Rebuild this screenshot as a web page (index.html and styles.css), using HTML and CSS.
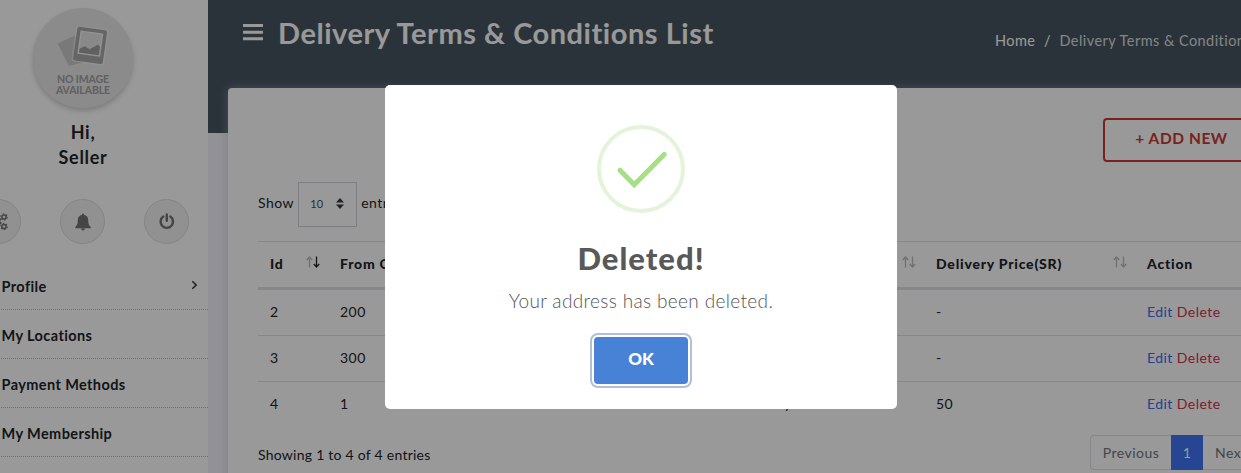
FILE: index.html
```html
<!DOCTYPE html>
<html lang="en">
<head>
<meta charset="utf-8">
<title>Delivery Terms &amp; Conditions List</title>
<link rel="stylesheet" href="styles.css">
</head>
<body>
<div class="app">
  <aside class="sidebar">
    <div class="avatar">
      <svg class="avatar-art" width="54" height="42" viewBox="0 0 54 42">
        <path d="M1.500 17.500 19 9.500 28 36 13 40z" fill="#cacaca"/>
        <g transform="rotate(8 35 20)">
          <rect x="17.500" y="1" width="33" height="37" rx="3" fill="#fff" opacity=".45"/>
          <rect x="19" y="2.500" width="30" height="34" rx="2" fill="#a8a8a8"/>
          <rect x="22.500" y="6" width="23" height="23.500" fill="#f4f4f4"/>
          <rect x="24" y="7.500" width="20" height="20.500" fill="#e4e4e4"/>
          <path d="M24 28V24l5-3 5 2.500 8-6 2 2.500V28z" fill="#a0a0a0"/>
        </g>
      </svg>
      <span class="avatar-text">NO IMAGE<br>AVAILABLE</span>
    </div>
    <div class="greeting">Hi,<br>Seller</div>
    <div class="actions">
      <a class="round"><svg width="20" height="18" viewBox="0 0 20 18" fill="none" stroke="#747474"><circle cx="6" cy="9" r="4" stroke-width="3"/><circle cx="6" cy="9" r="5.800" stroke-width="1.500" stroke-dasharray="2.200 2.300"/><circle cx="15" cy="4" r="2.100" stroke-width="1.500"/><circle cx="15" cy="4" r="3.200" stroke-width="1.200" stroke-dasharray="1.500 1.850"/><circle cx="15" cy="13.500" r="2.100" stroke-width="1.500"/><circle cx="15" cy="13.500" r="3.200" stroke-width="1.200" stroke-dasharray="1.500 1.850"/></svg></a>
      <a class="round"><svg width="16" height="18" viewBox="0 0 16 18" fill="#747474"><path d="M7 1.800V1.500a1 1 0 0 1 2 0v.3c2.600.5 4.200 2.500 4.200 5 0 4 .7 5.900 2.500 7.200v1.300H.3V14c1.800-1.300 2.500-3.200 2.500-7.200 0-2.500 1.600-4.500 4.200-5z"/><path d="M6 15.500h4a2 2 0 0 1-4 0z"/></svg></a>
      <a class="round"><svg width="16" height="17" viewBox="0 0 16 17" fill="none" stroke="#747474" stroke-width="2.400" stroke-linecap="round"><path d="M4.300 3.600a6.200 6.200 0 1 0 7 0M7.800 1.500v6.300"/></svg></a>
    </div>
    <ul class="menu">
      <li><span>Profile</span><svg width="7" height="10" viewBox="0 0 7 10" fill="none" stroke="#333" stroke-width="1.500"><path d="M1.300 1.200 5.200 5 1.300 8.800"/></svg></li>
      <li><span>My Locations</span></li>
      <li><span>Payment Methods</span></li>
      <li><span>My Membership</span></li>
    </ul>
  </aside>
  <main class="main">
    <header class="topbar">
      <svg class="burger" width="20" height="17" viewBox="0 0 20 17" fill="#fff"><path d="M0 0h20v3H0zM0 6.700h20v3H0zM0 13.300h20v3H0z"/></svg>
      <h1>Delivery Terms &amp; Conditions List</h1>
      <nav class="crumbs"><a>Home</a><i>/</i><span>Delivery Terms &amp; Conditions List</span></nav>
    </header>
    <section class="card">
      <div class="toolbar"><button class="add">+ ADD NEW</button></div>
      <div class="length"><span>Show</span><span class="select">10<svg width="8" height="11" viewBox="0 0 8 11" fill="#343a40"><path d="M0 4.500 4 0l4 4.500zM0 6.500h8L4 11z"/></svg></span><span>entries</span></div>
      <table>
        <colgroup><col class="c1"><col class="c2"><col class="c3"><col class="c4"><col class="c5"><col class="c6"></colgroup>
        <thead><tr>
          <th><div>Id<svg class="sort asc" width="14" height="12" viewBox="0 0 14 12"><path d="M3.500 11.500V1M.8 4 3.500 1l2.700 3"/><path class="down" d="M10.500.5V11M7.800 8l2.700 3 2.700-3"/></svg></div></th>
          <th><div>From City</div></th>
          <th></th>
          <th><div>City<svg class="sort" width="14" height="12" viewBox="0 0 14 12"><path d="M3.500 11.500V1M.8 4 3.500 1l2.700 3"/><path class="down" d="M10.500.5V11M7.800 8l2.700 3 2.700-3"/></svg></div></th>
          <th><div>Delivery Price(SR)<svg class="sort" width="14" height="12" viewBox="0 0 14 12"><path d="M3.500 11.500V1M.8 4 3.500 1l2.700 3"/><path class="down" d="M10.500.5V11M7.800 8l2.700 3 2.700-3"/></svg></div></th>
          <th><div>Action</div></th>
        </tr></thead>
        <tbody>
          <tr><td>2</td><td>200</td><td></td><td></td><td>-</td><td><a class="edit">Edit</a> <a class="del">Delete</a></td></tr>
          <tr><td>3</td><td>300</td><td></td><td></td><td>-</td><td><a class="edit">Edit</a> <a class="del">Delete</a></td></tr>
          <tr><td>4</td><td>1</td><td></td><td>Ryad</td><td>50</td><td><a class="edit">Edit</a> <a class="del">Delete</a></td></tr>
        </tbody>
      </table>
      <div class="foot">
        <span class="info">Showing 1 to 4 of 4 entries</span>
        <div class="pager"><a class="prev">Previous</a><a class="cur">1</a><a class="next">Next</a></div>
      </div>
    </section>
  </main>
</div>
<div class="overlay">
  <div class="modal">
    <svg class="tick" width="88" height="88" viewBox="0 0 88 88" fill="none"><circle cx="44" cy="44" r="42" stroke="#a5dc86" stroke-opacity=".3" stroke-width="4"/><path d="M23 45.200 37.200 59.800 67.200 29.400" stroke="#a5e085" stroke-width="5" stroke-linecap="round"/></svg>
    <h2>Deleted!</h2>
    <p>Your address has been deleted.</p>
    <button class="ok">OK</button>
  </div>
</div>
</body>
</html>
```
FILE: styles.css
```css
* { box-sizing: border-box; }
html, body { margin: 0; height: 473px; overflow: hidden; }
body { font: 14px/21px Lato, "Open Sans", sans-serif; font-variant-ligatures: none; letter-spacing: .25px; color: #212529; background: #f3f2fb; position: relative; }
button { font-family: inherit; }
.app { display: flex; width: 1366px; margin-left: -42px; height: 473px; }

.sidebar { width: 250px; background: #fff; flex: none; padding-top: 8px; }
.avatar { width: 100px; height: 100px; margin: 0 auto; border-radius: 50%; background: #e8e8e8; box-shadow: 0 3px 5px rgba(0,0,0,.18); display: flex; flex-direction: column; align-items: center; padding-top: 18px; }
.avatar-art { flex: none; }
.avatar-text { font: 700 10.500px/11px Lato, sans-serif; letter-spacing: -.1px; color: #a0a0a0; text-align: center; margin-top: 6px; }
.greeting { text-align: center; font-size: 18px; line-height: 25px; font-weight: 700; letter-spacing: .7px; margin-top: 12px; height: 79px; }
.actions { display: flex; justify-content: center; gap: 39px; margin-right: 1px; }
.round { width: 45px; height: 45px; border-radius: 50%; background: #f2f2f2; border: 1px solid #ddd; display: flex; align-items: center; justify-content: center; }
.menu { list-style: none; margin: 17px 0 0 43px; padding: 0; font-size: 14.500px; letter-spacing: .4px; font-weight: 700; }
.menu li { height: 49px; border-bottom: 1px dotted #bbb; display: flex; align-items: center; justify-content: space-between; padding-right: 10px; }
.menu span { padding: 2px 0 0 .5px; }

.main { flex: 1; }
.topbar { height: 133px; background: #495561; display: flex; padding-left: 35px; color: #fff; }
.burger { margin-top: 24px; flex: none; }
h1 { margin: 15px 0 0 15px; font-size: 29px; line-height: 36px; letter-spacing: .53px; font-weight: 700; width: 717px; white-space: nowrap; }
.crumbs { margin-top: 30px; white-space: nowrap; display: flex; gap: 8.500px; font-size: 14.500px; letter-spacing: .45px; }
.crumbs i { font-style: normal; }
.crumbs span { color: #dcdfe2; }

.card { margin: -45px 20px 0; height: 500px; background: #fff; border-radius: 4px; padding: 30px; box-shadow: 0 0 10px rgba(183,172,206,.5); }
.toolbar { display: flex; justify-content: flex-end; }
.add { width: 157px; height: 44px; margin-right: 14px; border: 2px solid #c93a36; border-radius: 4px; background: none; color: #c93a36; font-size: 15.500px; letter-spacing: .55px; font-weight: 700; padding: 0 0 5px; }
.length { display: flex; align-items: center; gap: 4px; height: 45px; margin: 20px 0 14px; }
.length > span:not(.select) { margin-top: -4px; letter-spacing: .5px; }
.select { width: 59px; height: 45px; border: 1px solid #ced4da; font-size: 11px; color: #495057; display: flex; align-items: center; justify-content: space-between; padding: 0 12px 2px 11px; }
table { width: 1016px; table-layout: fixed; border-collapse: separate; border-spacing: 0; }
.c1 { width: 70px; } .c2 { width: 220px; } .c3 { width: 215px; } .c4 { width: 161px; } .c5 { width: 211px; } .c6 { width: 139px; }
th, td { padding: 0 8px 2px 12px; text-align: left; white-space: nowrap; border-top: 1px solid #dee2e6; height: 46px; letter-spacing: .45px; }
th { height: 49px; border-bottom: 3px solid #dee2e6; font-weight: 900; letter-spacing: .78px; }
tbody tr:first-child td { border-top: 0; height: 45px; }
th div { display: flex; justify-content: space-between; align-items: center; }
.sort { margin-top: -3px; fill: none; stroke: #bcbcbc; stroke-width: 1.300; }
.asc .down { stroke: #212529; }
.edit { color: #4169f0; } .del { color: #cf304b; }
.foot { display: flex; justify-content: space-between; padding-top: 8px; }
.info { padding-top: 9px; }
.pager { display: flex; height: 35px; margin-right: 8px; color: #6c757d; letter-spacing: .45px; }
.pager a { border: 1px solid #dee2e6; height: 35px; display: flex; align-items: center; justify-content: center; padding-bottom: 1px; }
.prev { width: 81px; border-radius: 4px 0 0 4px; }
.pager .prev { border-right: 0; }
.pager .cur { width: 32px; background: #4073f5; border-color: #4073f5; color: #fff; }
.pager .next { width: 63px; justify-content: flex-start; padding-left: 12px; border-left: 0; }

.overlay { position: absolute; left: -42px; top: 0; width: 1366px; height: 473px; background: rgba(0,0,0,.4); display: flex; justify-content: center; align-items: flex-start; padding-top: 85px; }
.modal { width: 512px; height: 324px; background: #fff; border-radius: 5px; display: flex; flex-direction: column; align-items: center; padding-top: 40px; }
h2 { margin: 25px 0 0; font-size: 31px; line-height: 40px; letter-spacing: 1px; font-weight: 900; color: #595959; }
p { margin: 10px 0 0; font-size: 19px; line-height: 26px; letter-spacing: .35px; font-weight: 300; color: #545454; }
.ok { margin-top: 23px; width: 94px; height: 47px; border: 0; border-radius: 4px; background: #4882d6; color: #fff; font-size: 17px; font-weight: 900; padding: 0 0 4px; box-shadow: 0 0 0 2px #fff, 0 0 0 4px #b1bfd9; flex: none; }
```
